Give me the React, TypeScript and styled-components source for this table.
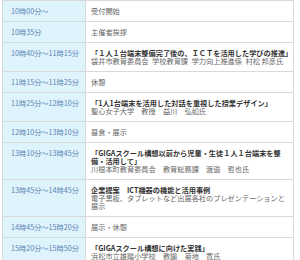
import styled, { createGlobalStyle } from 'styled-components';

interface IEntry {
  time: string;
  title?: string;
  lines: string[];
}

const schedule: IEntry[] = [
  { time: '10時00分～', lines: ['受付開始'] },
  { time: '10時35分', lines: ['主催者挨拶'] },
  {
    time: '10時40分～11時15分',
    title: '「１人１台端末整備完了後の、ＩＣＴを活用した学びの推進」',
    lines: ['袋井市教育委員会\u2002学校教育課\u2002学力向上推進係\u2002村松 邦彦氏'],
  },
  { time: '11時15分～11時25分', lines: ['休憩'] },
  {
    time: '11時25分～12時10分',
    title: '「1人1台端末を活用した対話を重視した授業デザイン」',
    lines: ['聖心女子大学　教授　益川　弘如氏'],
  },
  { time: '12時10分～13時10分', lines: ['昼食・展示'] },
  {
    time: '13時10分～13時45分',
    title: '「GIGAスクール構想以前から児童・生徒１人１台端末を整備・活用して」',
    lines: ['川根本町教育委員会　教育総務課　渡邉　哲也氏'],
  },
  {
    time: '13時45分～14時45分',
    title: '企業提案　ICT機器の機能と活用事例',
    lines: ['電子黒板、タブレットなど出展各社のプレゼンテーションと展示'],
  },
  { time: '14時45分～15時20分', lines: ['展示・休憩'] },
  {
    time: '15時20分～15時50分',
    title: '「GIGAスクール構想に向けた実践」',
    lines: ['浜松市立雄踏小学校　教諭　菊地　寛氏'],
  },
];

export default function App() {
  return (
    <>
      <GlobalStyle />
      <Table>
        <tbody>
          {schedule.map((item) => (
            <tr key={item.time}>
              <TimeCell>{item.time}</TimeCell>
              <DetailCell>
                {item.title && <Title>{item.title}</Title>}
                {item.lines.map((line) => (
                  <Line key={line}>{line}</Line>
                ))}
              </DetailCell>
            </tr>
          ))}
        </tbody>
      </Table>
    </>
  );
}

const GlobalStyle = createGlobalStyle`
  body {
    margin: 0;
    background: #ffffff;
    font-family: 'Noto Sans CJK JP', 'Noto Sans', sans-serif;
  }
`;

const Table = styled.table`
  margin: 0 0 0 2px;
  width: 292px;
  border-collapse: collapse;
  table-layout: fixed;
  font-size: 7.2px;
  line-height: 8px;
`;

const TimeCell = styled.th`
  width: 83px;
  box-sizing: border-box;
  padding: 6px 0 6px 8px;
  vertical-align: top;
  text-align: left;
  font-weight: 400;
  color: #5b84b1;
  background: #dff3fd;
  border: 1px solid #d9d9d9;
  white-space: nowrap;
`;

const DetailCell = styled.td`
  padding: 6px 2px 6px 5px;
  vertical-align: top;
  color: #666666;
  border: 1px solid #d9d9d9;
`;

const Title = styled.div`
  font-weight: 700;
  color: #333333;
`;

const Line = styled.div``;
